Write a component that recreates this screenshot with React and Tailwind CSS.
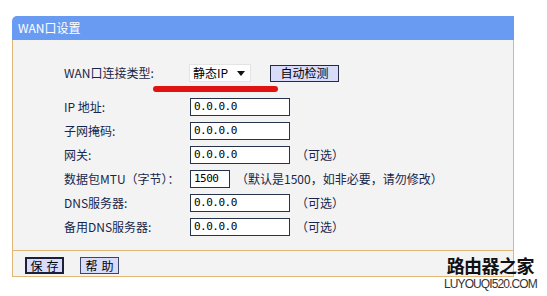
const FONT = { fontFamily: '"Noto Sans CJK SC", "Noto Sans", sans-serif' };

const rows = [
  { label: "IP 地址:", value: "0.0.0.0" },
  { label: "子网掩码:", value: "0.0.0.0" },
  { label: "网关:", value: "0.0.0.0", note: "（可选）" },
  { label: "数据包MTU（字节）：", value: "1500", narrow: true, note: "（默认是1500，如非必要，请勿修改）" },
  { label: "DNS服务器:", value: "0.0.0.0", note: "（可选）" },
  { label: "备用DNS服务器:", value: "0.0.0.0", note: "（可选）" },
];

function TextInput({ value, narrow }) {
  return (
    <div
      className={`${narrow ? "w-[40px]" : "w-[100px]"} h-[18px] bg-white border border-[#27334a] flex items-center pl-[3px] text-[11px] text-black`}
      style={{ fontFamily: '"DejaVu Sans Mono", monospace', letterSpacing: "-0.5px" }}
    >
      {value}
    </div>
  );
}

function Field({ label, value, note, narrow }) {
  return (
    <div className="h-[24px] flex items-center">
      <div className="w-[126px] text-[12px] leading-none text-[#18264a]">{label}</div>
      <TextInput value={value} narrow={narrow} />
      {note && <div className="ml-[6px] text-[12px] leading-none text-[#18264a]">{note}</div>}
    </div>
  );
}

function FooterButton({ children, active }) {
  return (
    <div
      className={`${active ? "border-2 border-[#1a1f3a]" : "border border-[#3a4668]"} w-[39px] h-[17px] bg-[#d8dbfa] flex items-center justify-center pl-[4px] text-[12px] leading-none text-black whitespace-nowrap tracking-[4px]`}
    >
      {children}
    </div>
  );
}

export default function App() {
  return (
    <div className="w-[547px] h-[296px] bg-white relative overflow-hidden" style={FONT}>
      <div className="pt-[16px] pl-[12px]">
        <div className="w-[502px]">
          <div className="h-[24px] bg-[#6a9bf2] rounded-tl-[5px] flex items-center pl-[6px] text-[12px] text-white leading-none">
            WAN口设置
          </div>
          <div className="border-x border-b border-[#e2b676] bg-[#f3f3f3]">
            <div className="pl-[51px] pt-[24px] pb-[11px]">
              <div className="h-[18px] flex items-center">
                <div className="w-[125px] text-[12px] leading-none text-[#18264a]">WAN口连接类型:</div>
                <div className="w-[62px] h-[18px] bg-white border border-[#e4e4e4] flex items-center justify-between pl-[3px] pr-[5px]">
                  <span className="text-[12px] leading-none text-black">静态IP</span>
                  <svg width="8" height="5" viewBox="0 0 8 5">
                    <path d="M0 0 H8 L4 5 Z" fill="#111" />
                  </svg>
                </div>
                <div className="ml-[19px] w-[69px] h-[17px] bg-[#d8dbfa] border border-[#222a44] flex items-center justify-center text-[12px] leading-none text-black">
                  自动检测
                </div>
              </div>
              <div className="ml-[89px] mt-[4px] w-[125px] h-[6px] rounded-full bg-[#e01212]" />
              <div className="mt-[3px]">
                {rows.map((r) => (
                  <Field key={r.label} {...r} />
                ))}
              </div>
            </div>
            <div className="border-t border-[#e2b676] pl-[12px] pt-[6px] pb-[2px] flex gap-[16px]">
              <FooterButton active>保存</FooterButton>
              <FooterButton>帮助</FooterButton>
            </div>
          </div>
        </div>
      </div>
      <div className="absolute left-[444px] top-[256px] flex flex-col items-center">
        <div className="h-[18px] text-[18px] font-bold leading-[18px] text-[#111] tracking-[-0.5px]">路由器之家</div>
        <div
          className="mt-[5px] h-[11px] text-[12px] leading-[11px] text-[#333] tracking-[-0.9px]"
          style={{ fontFamily: '"Liberation Sans", sans-serif' }}
        >
          LUYOUQI520.COM
        </div>
      </div>
    </div>
  );
}
